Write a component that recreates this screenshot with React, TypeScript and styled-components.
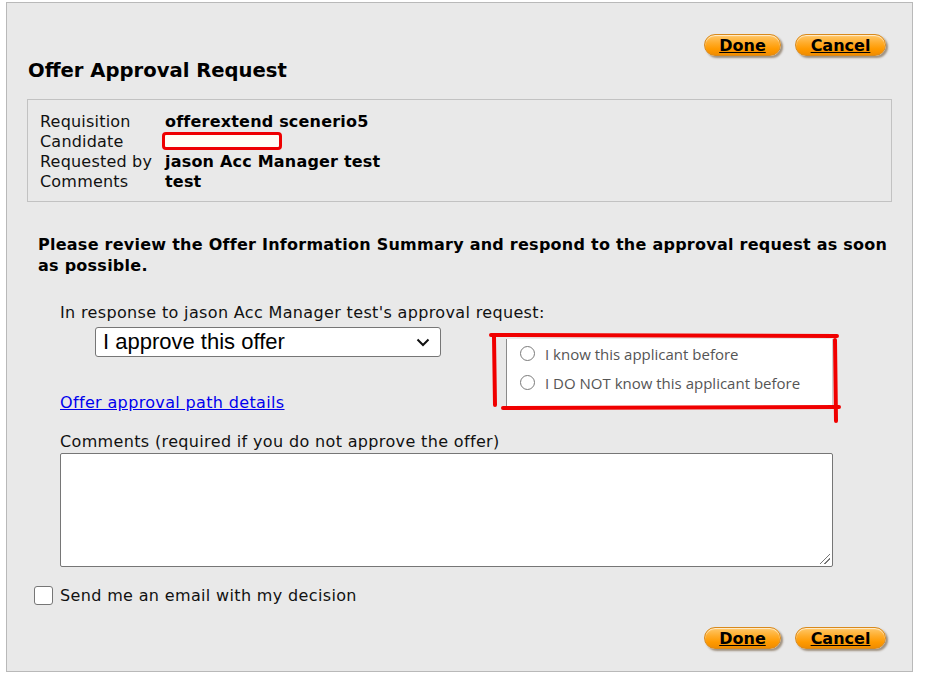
import React from "react";
import styled, { createGlobalStyle } from "styled-components";

const GlobalStyle = createGlobalStyle`
  body {
    margin: 0;
    background: #ffffff;
    font-family: "DejaVu Sans", Verdana, sans-serif;
    color: #000;
  }
`;

const details = [
  { label: "Requisition", value: "offerextend scenerio5" },
  { label: "Candidate", value: "", hidden: true },
  { label: "Requested by", value: "jason Acc Manager test" },
  { label: "Comments", value: "test" },
];

function ButtonBar() {
  return (
    <ButtonRow>
      <OrangeButton $width={77}>Done</OrangeButton>
      <OrangeButton $width={91}>Cancel</OrangeButton>
    </ButtonRow>
  );
}

export default function App() {
  return (
    <Page>
      <GlobalStyle />
      <Panel>
        <TopButtons>
          <ButtonBar />
        </TopButtons>
        <Title>Offer Approval Request</Title>
        <InfoBox>
          {details.map((d) => (
            <InfoRow key={d.label}>
              <InfoLabel>{d.label}</InfoLabel>
              {d.hidden ? <Redacted /> : <InfoValue>{d.value}</InfoValue>}
            </InfoRow>
          ))}
        </InfoBox>
        <Instructions>
          Please review the Offer Information Summary and respond to the approval
          request as soon as possible.
        </Instructions>
        <Form>
          <FieldLabel>In response to jason Acc Manager test's approval request:</FieldLabel>
          <DecisionRow>
            <LeftColumn>
              <SelectBox>
                <span>I approve this offer</span>
                <svg width="14" height="9" viewBox="0 0 14 9">
                  <path d="M1.5 1.5 L7 7 L12.5 1.5" fill="none" stroke="#111" strokeWidth="2" />
                </svg>
              </SelectBox>
              <PathLink href="#">Offer approval path details</PathLink>
            </LeftColumn>
            <KnowBox>
              <RadioRow>
                <RadioCircle />
                I know this applicant before
              </RadioRow>
              <RadioRow>
                <RadioCircle />
                I DO NOT know this applicant before
              </RadioRow>
              <Marker width="360" height="100" viewBox="0 0 360 100">
                <path d="M-16 -4 L330 -3" />
                <path d="M-13 -2 L-12 66" />
                <path d="M-4 69 L332 68" />
                <path d="M328 1 L329 82" />
              </Marker>
            </KnowBox>
          </DecisionRow>
          <FieldLabel $gap={19}>Comments (required if you do not approve the offer)</FieldLabel>
          <CommentArea />
        </Form>
        <CheckRow>
          <CheckBox />
          Send me an email with my decision
        </CheckRow>
        <BottomButtons>
          <ButtonBar />
        </BottomButtons>
      </Panel>
    </Page>
  );
}

const Page = styled.div`
  padding: 2px 0 0 6px;
`;

const Panel = styled.div`
  box-sizing: border-box;
  width: 907px;
  height: 670px;
  background: #e9e9e9;
  border: 1px solid #b9b9b9;
  padding: 0 20px;
  display: flex;
  flex-direction: column;
`;

const TopButtons = styled.div`
  padding-top: 31px;
  padding-right: 6px;
`;

const BottomButtons = styled.div`
  margin-top: 22px;
  padding-right: 6px;
`;

const ButtonRow = styled.div`
  display: flex;
  justify-content: flex-end;
  gap: 14px;
`;

const OrangeButton = styled.a<{ $width: number }>`
  box-sizing: border-box;
  width: ${(p) => p.$width}px;
  height: 22px;
  border-radius: 11px;
  border: 1px solid #d98a1c;
  background: linear-gradient(#ffc86a 0%, #ffac2a 40%, #ff9a00 70%, #f08c00 100%);
  box-shadow: 2px 2px 2px rgba(70, 40, 0, 0.45), inset 0 1px 1px rgba(255, 255, 255, 0.7);
  display: flex;
  align-items: center;
  justify-content: center;
  font-weight: bold;
  font-size: 16px;
  color: #000;
  text-decoration: underline;
  cursor: pointer;
`;

const Title = styled.h1`
  margin: 3px 0 0 1px;
  font-size: 19.6px;
  line-height: 24px;
  font-weight: bold;
`;

const InfoBox = styled.div`
  margin-top: 16px;
  border: 1px solid #c2c2c2;
  padding: 11px 12px 10px;
  display: flex;
  flex-direction: column;
`;

const InfoRow = styled.div`
  display: flex;
  align-items: center;
  height: 20px;
  font-size: 16px;
`;

const InfoLabel = styled.span`
  width: 125px;
  color: #111;
  letter-spacing: 0.2px;
`;

const InfoValue = styled.span`
  font-weight: bold;
  letter-spacing: 0.2px;
`;

const Redacted = styled.span`
  box-sizing: border-box;
  margin-left: -3px;
  width: 120px;
  height: 18px;
  background: #fffdf5;
  border: 3px solid #ee0000;
  border-radius: 4px;
`;

const Instructions = styled.p`
  margin: 32px 0 0 11px;
  font-size: 16px;
  line-height: 21px;
  font-weight: bold;
  letter-spacing: 0.25px;
`;

const Form = styled.div`
  margin: 27px 0 0 33px;
  width: 773px;
  display: flex;
  flex-direction: column;
`;

const FieldLabel = styled.div<{ $gap?: number }>`
  margin-top: ${(p) => p.$gap ?? 0}px;
  font-size: 16px;
  line-height: 20px;
  color: #111;
  letter-spacing: 0.35px;
`;

const DecisionRow = styled.div`
  display: flex;
  justify-content: space-between;
  margin-top: 4px;
`;

const LeftColumn = styled.div`
  display: flex;
  flex-direction: column;
  align-items: flex-start;
`;

const SelectBox = styled.div`
  box-sizing: border-box;
  margin-left: 35px;
  width: 346px;
  height: 30px;
  background: #fff;
  border: 1px solid #767676;
  border-radius: 3px;
  padding: 0 10px 0 7px;
  display: flex;
  align-items: center;
  justify-content: space-between;
  font-family: "Liberation Sans", Arial, sans-serif;
  font-size: 22px;
  color: #000;
`;

const PathLink = styled.a`
  margin-top: 36px;
  font-size: 16px;
  line-height: 20px;
  color: #0000ee;
  text-decoration: underline;
  letter-spacing: 0.35px;
`;

const KnowBox = styled.div`
  position: relative;
  box-sizing: border-box;
  margin-top: 12px;
  width: 327px;
  height: 68px;
  background: #fff;
  border-left: 1px solid #8a8a8a;
  border-bottom: 1px solid #9a9a9a;
  border-right: 1px solid #d0d0d0;
  padding: 0 0 0 13px;
  display: flex;
  flex-direction: column;
`;

const RadioRow = styled.label`
  height: 29px;
  display: flex;
  align-items: center;
  gap: 10px;
  font-family: "Open Sans", sans-serif;
  font-size: 15px;
  color: #555;
`;

const RadioCircle = styled.span`
  box-sizing: border-box;
  width: 15px;
  height: 15px;
  border: 1px solid #7a7a7a;
  border-radius: 50%;
  background: #fff;
`;

const Marker = styled.svg`
  position: absolute;
  left: 0;
  top: 0;
  overflow: visible;
  pointer-events: none;

  path {
    fill: none;
    stroke: #f00000;
    stroke-width: 4;
    stroke-linecap: round;
  }
`;

const CommentArea = styled.div`
  position: relative;
  box-sizing: border-box;
  margin-top: 1px;
  height: 114px;
  background: #fff;
  border: 1px solid #767676;
  border-radius: 2px;

  &::after {
    content: "";
    position: absolute;
    right: 2px;
    bottom: 2px;
    width: 10px;
    height: 10px;
    background: linear-gradient(
      135deg,
      transparent 46%,
      #777 46%,
      #777 54%,
      transparent 54%,
      transparent 70%,
      #777 70%,
      #777 78%,
      transparent 78%
    );
  }
`;

const CheckRow = styled.label`
  margin: 18px 0 0 7px;
  display: flex;
  align-items: center;
  gap: 7px;
  font-size: 16px;
  color: #111;
  height: 20px;
  letter-spacing: 0.35px;
`;

const CheckBox = styled.span`
  box-sizing: border-box;
  width: 19px;
  height: 19px;
  border: 1px solid #767676;
  border-radius: 3px;
  background: #fff;
`;
